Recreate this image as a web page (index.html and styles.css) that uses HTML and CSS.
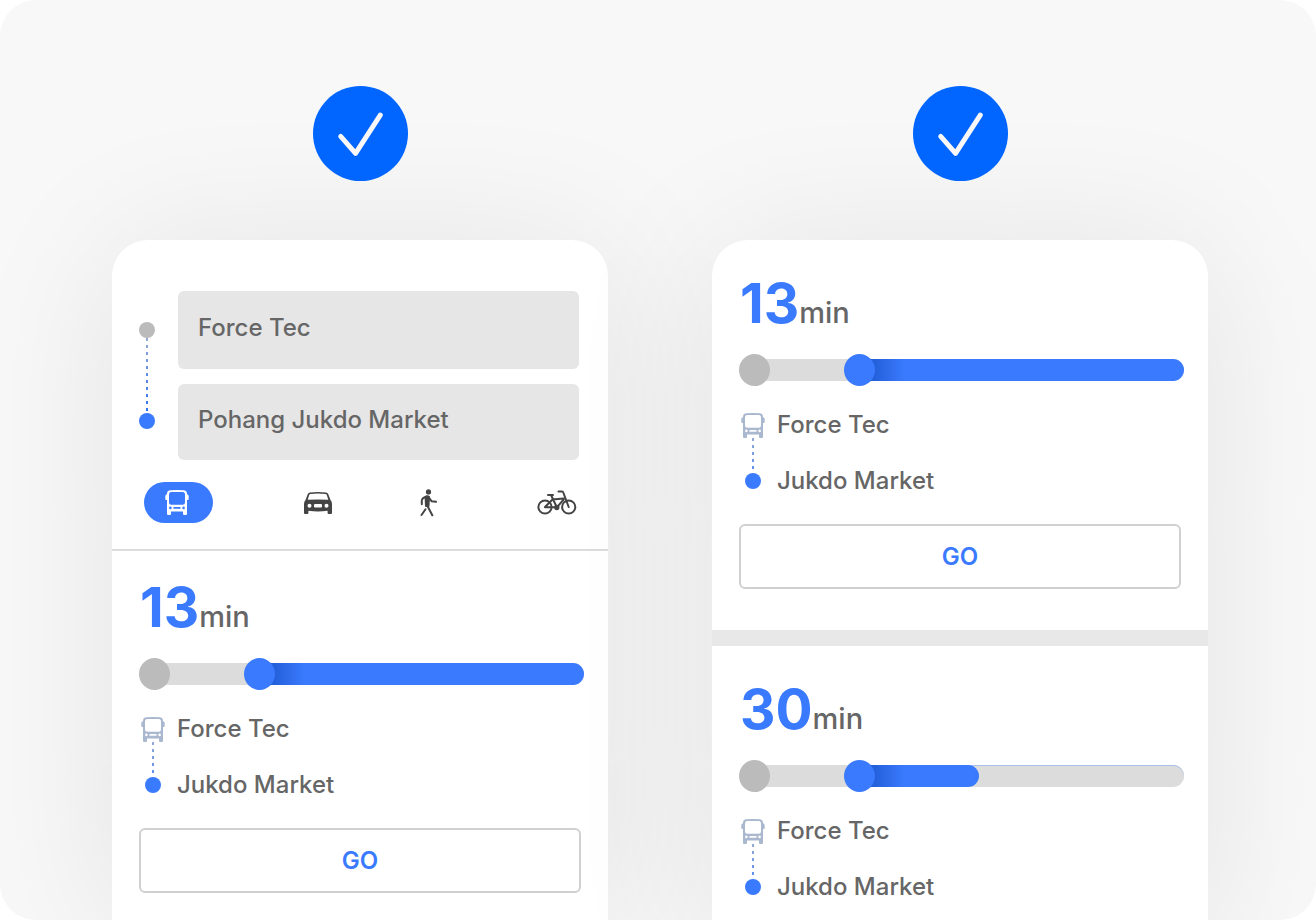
FILE: index.html
```html
<!DOCTYPE html>
<html lang="en">
<head>
<meta charset="utf-8">
<meta name="viewport" content="width=device-width, initial-scale=1">
<title>Route finder</title>
<link rel="stylesheet" href="styles.css">
</head>
<body>
<svg class="sprite" aria-hidden="true">
  <symbol id="check" viewBox="0 0 96 96">
    <path d="M28 51 43 68 68 29.500" fill="none" stroke="currentColor" stroke-width="5" stroke-linecap="round" stroke-linejoin="round"/>
  </symbol>
  <symbol id="bus" viewBox="0 0 24 25">
    <path fill="currentColor" fill-rule="evenodd" d="M2 21.500V4C2 1.500 3.200.500 5.500.300Q12-.200 18.500.300C20.800.500 22 1.500 22 4v17.500ZM4 5v7.500q0 2.300 2.200 2.300h11.600q2.200 0 2.200-2.300V5q0-2.800-2.200-2.900H6.200Q4 2.200 4 5ZM4.100 17.900a1.300 1.300 0 1 0 2.600 0a1.300 1.300 0 1 0-2.600 0ZM17.300 17.900a1.300 1.300 0 1 0 2.600 0a1.300 1.300 0 1 0-2.600 0ZM9.200 17a.9.900 0 0 0 0 1.800h5.600a.9.900 0 0 0 0-1.800Z"/>
    <path fill="currentColor" d="M2 20h4v4q0 1-1 1H3q-1 0-1-1ZM18 20h4v4q0 1-1 1h-2q-1 0-1-1ZM2.500 4v6H1.300Q.300 10 .300 9V6Q.300 4.300 2.500 4ZM21.500 4v6h1.200q1 0 1-1V6q0-1.700-2.200-2Z"/>
  </symbol>
  <symbol id="car" viewBox="0 0 28 22">
    <path fill="currentColor" fill-rule="evenodd" d="M6 .4Q14-.4 22 .400q1.600.200 2.200 1.700L26.500 8Q28 9.500 28 12v9q0 1-1 1h-2.400q-1 0-1-1v-2.200Q14 20 4.400 18.800V21q0 1-1 1H1q-1 0-1-1v-9Q0 9.500 1.500 8L3.800 2.100Q4.400.600 6 .400ZM6.500 2Q5.500 2.100 5.200 3L3.700 7.800Q14 7 24.300 7.800L22.800 3q-.3-.9-1.300-1Q14 1.200 6.500 2ZM3.500 13.700a2 2 0 1 0 4 0a2 2 0 1 0-4 0ZM20.500 13.700a2 2 0 1 0 4 0a2 2 0 1 0-4 0ZM11 12q-1 0-1 1v1.600q0 1 1 1h6q1 0 1-1V13q0-1-1-1Z"/>
  </symbol>
  <symbol id="walk" viewBox="0 0 18 28">
    <g fill="none" stroke="currentColor" stroke-width="2" stroke-linecap="round" stroke-linejoin="round">
      <circle cx="8.500" cy="2.900" r="2.600" fill="currentColor" stroke="none"/>
      <path d="M6.500 7.500Q2 9 1.800 11.500v3.800M8.500 8l3.200 4.300 4.300.500M7.500 17 12.300 26.300M5.500 20.200 1.500 26" />
      <path d="M5.600 8.200Q7.500 6.700 9 8L8.500 17H6Z" fill="currentColor"/>
    </g>
  </symbol>
  <symbol id="bike" viewBox="0 0 40 26">
    <g fill="none" stroke="currentColor" stroke-width="2" stroke-linecap="round" stroke-linejoin="round">
      <circle cx="8" cy="17" r="6.600"/>
      <circle cx="31.700" cy="17" r="6.600"/>
      <path d="M8 17 15.500 9.500 26.500 8.500M14 5 19.800 17.300H8M19.800 17.300 26.700 9.500M11 5h5M21.500 1.500h3.500q1 0 1.300 1L31.700 17"/>
      <circle cx="19.800" cy="17.500" r="1.700" fill="currentColor"/>
    </g>
  </symbol>
</svg>

<main class="stage">
  <div class="column">
    <div class="badge"><svg><use href="#check"/></svg></div>
    <article class="card">
      <form class="search">
        <div class="fields">
          <div class="trail"><i class="dot dot-start"></i><i class="dashes"></i><i class="dot"></i></div>
          <div class="inputs">
            <input class="field field-from" type="text" aria-label="From" value="Force Tec">
            <input class="field" type="text" aria-label="To" value="Pohang Jukdo Market">
          </div>
        </div>
        <div class="modes">
          <button class="mode mode-active" type="button" aria-label="Bus"><svg class="icon-bus"><use href="#bus"/></svg></button>
          <button class="mode" type="button" aria-label="Car"><svg class="icon-car"><use href="#car"/></svg></button>
          <button class="mode" type="button" aria-label="Walk"><svg class="icon-walk"><use href="#walk"/></svg></button>
          <button class="mode" type="button" aria-label="Bicycle"><svg class="icon-bike"><use href="#bike"/></svg></button>
        </div>
      </form>
      <section class="route">
        <h2 class="time">13<span class="unit">min</span></h2>
        <div class="track">
          <i class="knob knob-start"></i><i class="leg"></i><i class="knob"></i>
          <div class="ride"><div class="fill" style="width:100%"></div></div>
        </div>
        <div class="stops">
          <div class="stop-trail"><svg class="icon-bus"><use href="#bus"/></svg><i class="dashes dashes-light"></i><i class="dot"></i></div>
          <div class="names"><p class="name name-from">Force Tec</p><p class="name">Jukdo Market</p></div>
        </div>
        <button class="go" type="button">GO</button>
      </section>
    </article>
  </div>

  <div class="column">
    <div class="badge"><svg><use href="#check"/></svg></div>
    <article class="card">
      <section class="route route-listed">
        <h2 class="time">13<span class="unit">min</span></h2>
        <div class="track">
          <i class="knob knob-start"></i><i class="leg"></i><i class="knob"></i>
          <div class="ride"><div class="fill" style="width:100%"></div></div>
        </div>
        <div class="stops">
          <div class="stop-trail"><svg class="icon-bus"><use href="#bus"/></svg><i class="dashes dashes-light"></i><i class="dot"></i></div>
          <div class="names"><p class="name name-from">Force Tec</p><p class="name">Jukdo Market</p></div>
        </div>
        <button class="go" type="button">GO</button>
      </section>
      <section class="route route-listed">
        <h2 class="time">30<span class="unit">min</span></h2>
        <div class="track">
          <i class="knob knob-start"></i><i class="leg"></i><i class="knob"></i>
          <div class="ride ride-partial"><div class="fill" style="width:37%"></div></div>
        </div>
        <div class="stops">
          <div class="stop-trail"><svg class="icon-bus"><use href="#bus"/></svg><i class="dashes dashes-light"></i><i class="dot"></i></div>
          <div class="names"><p class="name name-from">Force Tec</p><p class="name">Jukdo Market</p></div>
        </div>
      </section>
    </article>
  </div>
</main>
</body>
</html>
```
FILE: styles.css
```css
* { box-sizing: border-box; }

body {
  margin: 0;
  background: #fff;
  color: #666;
  font: 500 24px/32px Inter, "Liberation Sans", sans-serif;
}

.sprite { position: absolute; width: 0; height: 0; }
svg { display: block; flex: none; }
i { display: block; flex: none; }
button, input { font: inherit; color: inherit; }
button { cursor: pointer; }

.stage {
  display: flex;
  gap: 104px;
  height: 100vh;
  padding: 86px 108px 0 112px;
  background: #f8f8f8;
  border-radius: 36px;
  overflow: hidden;
}

.column {
  flex: 1;
  display: flex;
  flex-direction: column;
  gap: 59px;
}

.badge {
  position: relative;
  z-index: 1;
  align-self: center;
  width: 95px;
  height: 95px;
  border-radius: 50%;
  background: #06f;
  color: #f8f8f8;
}
.badge svg { width: 95px; height: 95px; }

.card {
  flex: 1 0 auto;
  background: #fff;
  border-radius: 36px 36px 0 0;
  box-shadow: 0 8px 152px rgba(0, 0, 0, .09);
}

/* Search form */
.search {
  padding: 51px 29px 26px 27px;
  border-bottom: 2px solid #dcdcdc;
}
.fields { display: flex; gap: 23px; }
.trail {
  display: flex;
  flex-direction: column;
  align-items: center;
  padding: 31px 0 31px;
}
.dot {
  width: 16px;
  height: 16px;
  border-radius: 50%;
  background: #3a7afe;
}
.dot-start { background: #bbb; }
.dashes {
  flex: 1;
  width: 2px;
  background:
    repeating-linear-gradient(#fff0 0 3px, #fff 3px 7px),
    linear-gradient(#94a9d4, #2e6ff2);
}
.inputs {
  flex: 1;
  min-width: 0;
  display: flex;
  flex-direction: column;
  gap: 15px;
}
.field {
  width: 100%;
  height: 76px;
  padding: 0 20px 6px;
  border: 0;
  border-radius: 6px;
  background: #e6e6e6;
}
.field-from { height: 78px; }

.modes {
  display: grid;
  grid-template-columns: 160fr 116fr 117fr 40fr;
  justify-items: start;
  align-items: center;
  padding: 22px 2px 0 5px;
}
.mode {
  padding: 0;
  border: 0;
  background: none;
  color: #444;
}
.mode-active {
  padding: 8px 24px 8px 21px;
  border-radius: 24px;
  background: #3a7afe;
  color: #fff;
}
.icon-bus { width: 24px; height: 25px; }
.icon-car { width: 28px; height: 22px; }
.icon-walk { width: 18px; height: 28px; }
.icon-bike { width: 40px; height: 26px; }

/* Route result */
.route { padding: 28px 24px 0 27px; }
.route-listed { padding: 35px 24px 41px 27px; }
.route + .route { border-top: 16px solid #e8e8e8; }

.time {
  margin: 0 0 23px;
  padding-left: 1px;
  color: #3a7afe;
  font-size: 55px;
  line-height: 56px;
  font-weight: 700;
}
.unit {
  color: #666;
  font-size: 29px;
  line-height: 28px;
  font-weight: 500;
}

.track { display: flex; align-items: center; }
.knob {
  position: relative;
  width: 31px;
  height: 32px;
  border-radius: 50%;
  background: #3a7afe;
}
.knob-start { background: #bbb; }
.leg { width: 74px; height: 22px; background: #dcdcdc; box-shadow: -6px 0 #dcdcdc, 6px 0 #dcdcdc; }
.ride {
  flex: 1;
  height: 22px;
  margin-left: -16px;
  border-radius: 0 11px 11px 0;
  background: #dcdcdc;
}
.ride-partial { box-shadow: inset 0 1px #a9c0ea; }
.fill {
  height: 22px;
  border-radius: 0 11px 11px 0;
  background: linear-gradient(90deg, #235fd9 14px, #3a7afe 46px);
}

.stops { display: flex; gap: 12px; padding: 23px 2px 0; }
.stop-trail {
  display: flex;
  flex-direction: column;
  align-items: center;
  padding: 4px 0 8px;
  color: #a9b8cf;
}
.dashes-light { background:
    repeating-linear-gradient(#fff0 0 3px, #fff 3px 7px),
    linear-gradient(#94a9d4, #5b8cf5); }
.name { margin: 0; }
.name-from { margin-bottom: 24px; }

.go {
  display: block;
  width: calc(100% - 3px);
  height: 65px;
  margin-top: 27px;
  border: 2px solid #d0d0d0;
  border-radius: 6px;
  background: #fff;
  color: #3a7afe;
  font-weight: 600;
}
```
